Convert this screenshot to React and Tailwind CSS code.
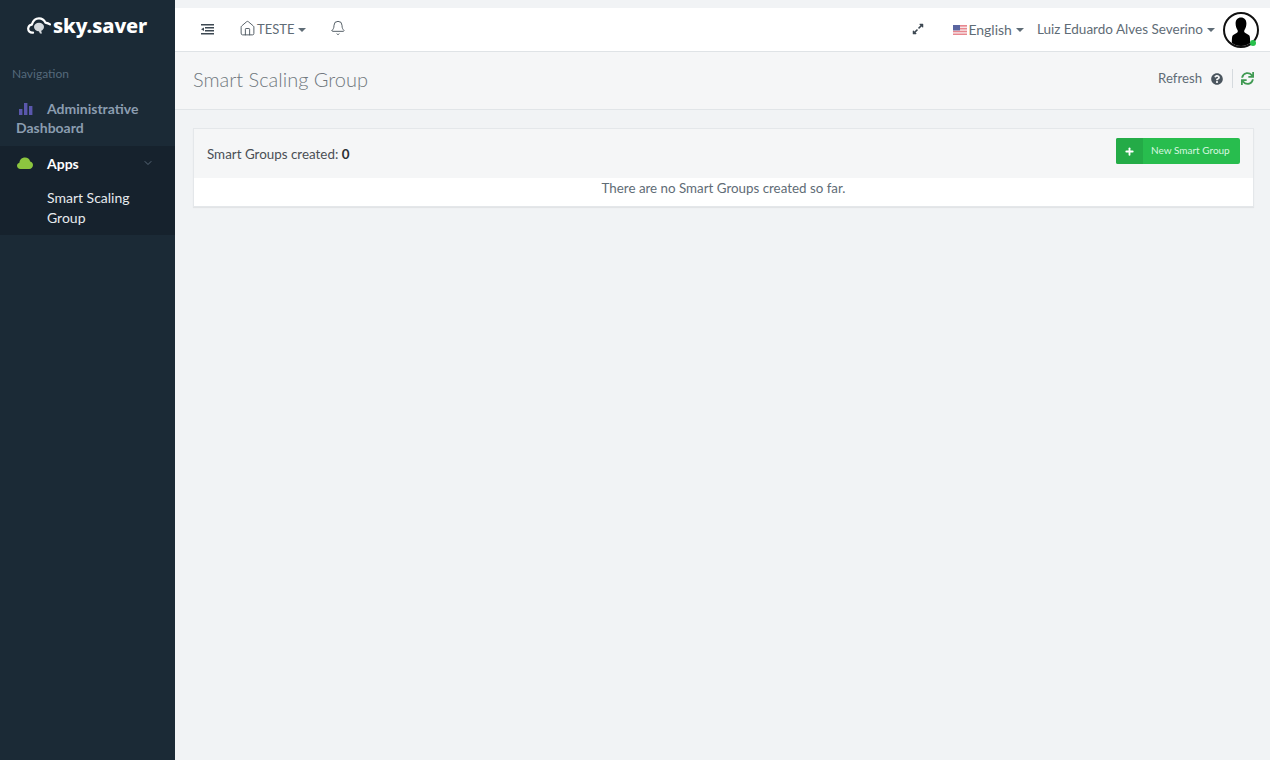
import React from "react";
import { Home, Bell, ChevronDown, Plus } from "lucide-react";
import { FaExpandAlt, FaQuestionCircle, FaSync } from "react-icons/fa";

const font = "font-['Lato','Noto_Sans',sans-serif]";

function Caret() {
    return <span className="ml-[4px] inline-block border-x-[4px] border-t-[4px] border-x-transparent border-t-[#5f6c76]" />;
}

function LogoCloud() {
    return (
        <svg width="24" height="18" viewBox="0 0 24 18" fill="none">
            <path d="M6 15.6C3 16 1 14 1.2 11.4 1.4 9.2 3 7.8 4.8 7.6 6 3.8 8.8 1.4 12 1.4c2.8 0 5.2 1.6 6.4 4.2 1 .2 3 .6 4.6 1.8" stroke="#fff" strokeWidth="2.2" strokeLinecap="round" />
            <ellipse cx="12" cy="10" rx="5" ry="4.2" fill="#d5dade" />
            <path d="M11.5 13.5l1.5 3h2l-1-3z" fill="#d5dade" />
        </svg>
    );
}

function Flag() {
    return (
        <svg width="14" height="10" viewBox="0 0 14 10" className="block">
            <rect width="14" height="10" fill="#e8878f" />
            <rect y="1.6" width="14" height="1.4" fill="#f6e4e6" />
            <rect y="4.4" width="14" height="1.4" fill="#f6e4e6" />
            <rect y="7.2" width="14" height="1.4" fill="#f6e4e6" />
            <rect width="7" height="5.4" fill="#5a65a0" />
        </svg>
    );
}

function Avatar() {
    return (
        <div className="relative h-[36px] w-[36px] overflow-hidden rounded-full border-2 border-[#111] bg-white">
            <svg viewBox="0 0 32 32" className="h-full w-full">
                <path d="M16 3.5c-3.4 0-5.4 2.4-5.4 6 0 2.6.7 4.8 1.9 6.4.5 1 .4 2-.2 2.7-1.2 1.2-3.6 1.7-4.6 3-.7 1-.9 3.8-.9 10.4h18.4c0-6.6-.2-9.4-.9-10.4-1-1.3-3.4-1.8-4.6-3-.6-.7-.7-1.7-.2-2.7 1.2-1.6 1.9-3.8 1.9-6.4 0-3.6-2-6-5.4-6z" fill="#000" />
            </svg>
        </div>
    );
}

function Sidebar() {
    return (
        <aside className="flex w-[175px] shrink-0 flex-col bg-[#1b2a36]">
            <div className="flex h-[52px] items-center pl-[27px]">
                <LogoCloud />
                <span className="ml-[2px] text-[20px] leading-none font-extrabold tracking-[-0.1px] text-white font-['Noto_Sans',sans-serif]">sky.saver</span>
            </div>
            <div className="mt-[14px] pl-[12px] text-[12px] leading-[16px] text-[#55697b]">Navigation</div>
            <div className="mt-[10px] px-[16px] pt-[7px] pb-[9px] text-[14px] leading-[19px] font-bold text-[#8b9db0]">
                <svg width="14" height="13" viewBox="0 0 14 13" className="mr-[14px] ml-[3px] inline-block align-[-1px]" fill="#5a57ad">
                    <rect x="0" y="7" width="3.4" height="6" />
                    <rect x="5" y="1" width="3.4" height="12" />
                    <rect x="10" y="4" width="3.4" height="9" />
                </svg>
                Administrative Dashboard
            </div>
            <div className="bg-[#16222d] pb-[8px]">
                <div className="flex h-[34px] items-center pl-[17px] pr-[21px] text-[14px] font-bold text-white">
                    <svg width="16" height="12" viewBox="0 0 16 12" fill="#8cc63f">
                        <path d="M3.5 12C1.5 12 0 10.6 0 8.8c0-1.5 1-2.7 2.4-3C2.6 2.6 4.8.4 8 .4c2.6 0 4.6 1.6 5.2 4 1.6.4 2.8 1.8 2.8 3.6 0 2.2-1.6 4-3.8 4z" />
                    </svg>
                    <span className="ml-[14px] flex-1">Apps</span>
                    <ChevronDown size={12} strokeWidth={1.5} className="text-[#6d7f90]" />
                </div>
                <div className="pl-[47px] pr-[30px] pt-[8px] text-[14px] leading-[19.5px] text-[#e6eaee]">Smart Scaling Group</div>
            </div>
        </aside>
    );
}

function Topbar() {
    return (
        <header className="mt-[8px] flex h-[44px] items-center border-b border-[#dfe3e6] bg-white pl-[26px] pr-[11px] text-[13.5px] text-[#5f6c76]">
            <svg width="13" height="11" viewBox="0 0 13 11" className="mb-[1px] text-[#3d4852]" fill="currentColor">
                <rect x="0" y="0" width="13" height="1.5" />
                <rect x="4" y="3" width="9" height="1.5" />
                <rect x="4" y="6" width="9" height="1.5" />
                <rect x="0" y="9" width="13" height="1.5" />
                <path d="M0 5.2L3 3.4V7z" />
            </svg>
            <Home size={17} strokeWidth={1.3} className="ml-[25px] mb-[2px] text-[#4a555e]" />
            <span className="ml-[1px] text-[13px]">TESTE</span>
            <Caret />
            <Bell size={16} strokeWidth={1.4} className="ml-[24px] mb-[3px] text-[#4a555e]" />
            <div className="ml-auto flex items-center">
                <FaExpandAlt size={12} className="mb-[1px] text-[#3d4852]" />
                <span className="ml-[29px] mr-[1px]"><Flag /></span>
                <span className="text-[14px]">English</span>
                <Caret />
                <span className="ml-[13px]">Luiz Eduardo Alves Severino</span>
                <Caret />
                <div className="relative ml-[8px]">
                    <Avatar />
                    <span className="absolute right-[3px] bottom-[2px] h-[6px] w-[6px] rounded-full bg-[#28c04c]" />
                </div>
            </div>
        </header>
    );
}

function TitleBar() {
    return (
        <div className="flex h-[58px] items-center justify-between border-b border-[#e1e5e8] bg-[#f5f6f7] pb-[3px] pl-[18px] pr-[16px]">
            <h1 className="text-[20px] font-light text-[#70787e]">Smart Scaling Group</h1>
            <div className="flex items-center text-[13.2px] text-[#5f6c76]">
                <span>Refresh</span>
                <FaQuestionCircle size={12} className="ml-[9px] text-[#4a555e]" />
                <span className="ml-[9px] mr-[8px] h-[19px] w-px bg-[#d5dade]" />
                <FaSync size={13} className="text-[#3f9a52]" />
            </div>
        </div>
    );
}

function GroupsCard() {
    return (
        <div className="ml-[18px] mr-[16px] mt-[18px] border border-[#e4e7ea] bg-white shadow-[0_1px_1px_rgba(0,0,0,0.06)]">
            <div className="flex h-[49px] items-start justify-between bg-[#f5f6f7] pt-[9px] pl-[13px] pr-[13px] text-[13.4px] text-[#4a4f55]">
                <span className="mt-[6px]">Smart Groups created: <b className="font-bold text-[#2b2f33]">0</b></span>
                <button className="flex h-[26px] w-[124px] items-center overflow-hidden rounded-[2px] bg-[#28bd4e] text-[10px] text-[#d9f7e0]">
                    <span className="flex h-full w-[27px] items-center justify-center bg-[#24ab47]">
                        <Plus size={11} strokeWidth={4} className="text-white" />
                    </span>
                    <span className="mb-[1px] ml-[8px]">New Smart Group</span>
                </button>
            </div>
            <p className="h-[28px] pt-px text-center text-[13.35px] leading-[19px] text-[#5f6c76]">There are no Smart Groups created so far.</p>
        </div>
    );
}

export default function App() {
    return (
        <div className={`flex h-[760px] w-[1270px] overflow-hidden bg-[#f1f3f5] ${font}`}>
            <Sidebar />
            <main className="flex min-w-0 flex-1 flex-col">
                <Topbar />
                <TitleBar />
                <GroupsCard />
            </main>
        </div>
    );
}
